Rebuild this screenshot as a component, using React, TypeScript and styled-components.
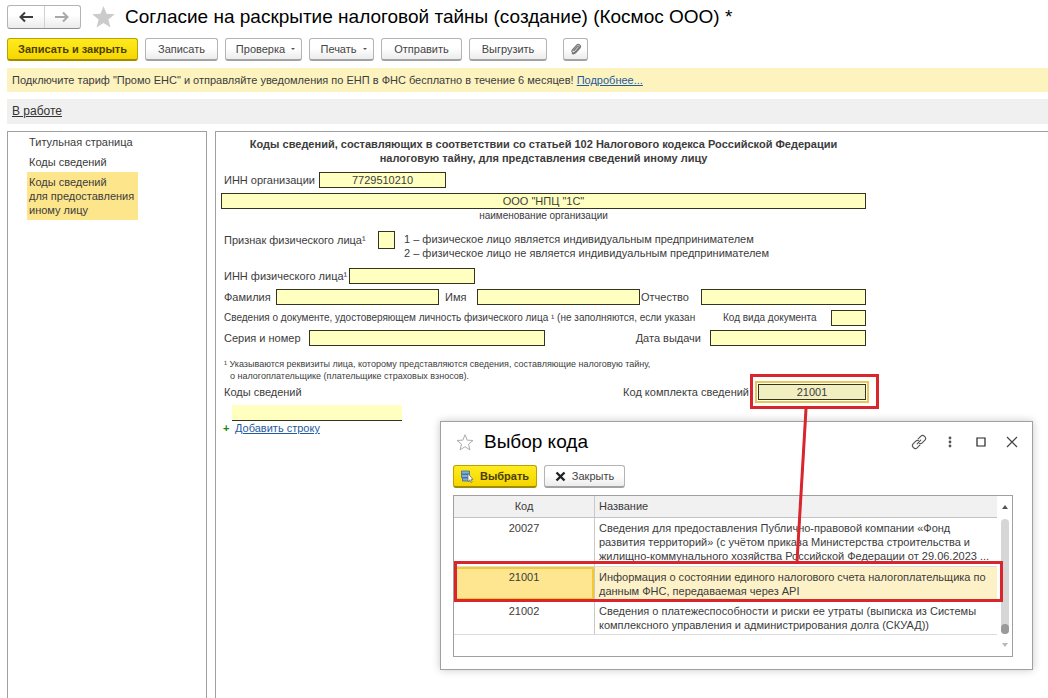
import React from "react";
import styled, { createGlobalStyle, css } from "styled-components";

const Global = createGlobalStyle`
  * { box-sizing: border-box; }
  body {
    margin: 0;
    background: #fff;
    color: #3c3c3c;
    font: 11px/14px "Liberation Sans", Arial, sans-serif;
  }
  button, input { font: inherit; color: inherit; }
  h1, h2, p { margin: 0; font-weight: normal; }
`;

const Page = styled.div`
  position: relative;
  display: flex;
  flex-direction: column;
  height: 100vh;
  overflow: hidden;
  padding: 4px 0 0 7px;
`;

const TitleBar = styled.header`
  display: flex;
  align-items: center;
  height: 25px;
`;

const NavGroup = styled.div`
  display: flex;
  width: 74px;
  height: 24px;
  border: 1px solid #b4b4b4;
  border-bottom-color: #8e8e8e;
  border-radius: 3px;
  background: linear-gradient(#fff 40%, #ebebeb);
`;

const NavButton = styled.button`
  flex: 1;
  display: flex;
  align-items: center;
  justify-content: center;
  padding: 0;
  border: 0;
  background: none;
  & + & { border-left: 1px solid #d2d2d2; }
`;

const IconButton = styled.button`
  display: flex;
  align-items: center;
  justify-content: center;
  padding: 0;
  border: 0;
  background: none;
`;

const StarButton = styled(IconButton)`
  margin: 0 9px 0 10px;
`;

const PageTitle = styled.h1`
  font-size: 19px;
  line-height: 24px;
  color: #000;
  white-space: nowrap;
`;

const Toolbar = styled.div<{ $top: number }>`
  display: flex;
  gap: 7px;
  margin-top: ${(p) => p.$top}px;
`;

const Button = styled.button<{ $w: number; $primary?: boolean; $apart?: boolean }>`
  display: flex;
  align-items: center;
  justify-content: center;
  gap: 6px;
  width: ${(p) => p.$w}px;
  height: 23px;
  padding: 0;
  white-space: nowrap;
  border: 1px solid #b4b4b4;
  border-bottom: 2px solid #a2a2a2;
  border-radius: 3px;
  background: linear-gradient(#fff 45%, #ececec);
  color: #444;
  ${(p) => p.$apart && css`margin-left: 9px;`}
  ${(p) =>
    p.$primary &&
    css`
      border-color: #b9a300;
      border-bottom-color: #a08c00;
      background: linear-gradient(#ffeb1f, #f5d500);
      color: #4a4000;
      font-weight: bold;
    `}
`;

const Caret = styled.span`
  width: 0;
  margin-right: -4px;
  border: 2px solid transparent;
  border-top-color: #555;
  border-bottom: 0;
`;

const Banner = styled.p`
  height: 24px;
  margin-top: 7px;
  padding-left: 5px;
  line-height: 24px;
  background: #fdf3bf;
`;

const Link = styled.a`
  color: #1f5ba0;
  text-decoration: underline;
`;

const StatusBar = styled.div`
  height: 25px;
  margin-top: 7px;
  padding-left: 5px;
  font-size: 12px;
  line-height: 25px;
  background: #f0f0f0;
  a { color: #333; }
`;

const Body = styled.div`
  flex: 1;
  display: flex;
  gap: 8px;
  margin-top: 7px;
`;

const Sections = styled.nav`
  flex: 0 0 200px;
  display: flex;
  flex-direction: column;
  align-items: flex-start;
  padding-left: 19px;
  border: 1px solid #a0a0a0;
  border-bottom: 0;
`;

const SectionLink = styled.a<{ $active?: boolean }>`
  padding: 3px 2px;
  color: inherit;
  text-decoration: none;
  white-space: pre-line;
  background: ${(p) => (p.$active ? "#fce58b" : "none")};
  ${(p) => p.$active && css`width: 111px;`}
`;

const FormPanel = styled.main`
  flex: 1;
  min-width: 0;
  padding: 5px;
  border: 1px solid #a0a0a0;
  border-width: 1px 0 0 1px;
`;

const Sheet = styled.form`
  max-width: 645px;
`;

const SheetTitle = styled.h2`
  font-size: 11px;
  font-weight: bold;
  line-height: 14px;
  text-align: center;
`;

const Row = styled.div<{ $top?: number; $start?: boolean }>`
  display: flex;
  align-items: ${(p) => (p.$start ? "flex-start" : "center")};
  min-height: 16px;
  margin-top: ${(p) => p.$top ?? 5}px;
  ${(p) => p.$start && css`label { line-height: 18px; }`}
`;

const Label = styled.label<{ $w?: number; $indent?: number; $end?: boolean; $small?: boolean }>`
  flex: ${(p) => (p.$w ? `0 0 ${p.$w}px` : "1")};
  min-width: 0;
  padding: ${(p) => (p.$end ? "0 9px 0 0" : `0 0 0 ${p.$indent ?? 3}px`)};
  text-align: ${(p) => (p.$end ? "right" : "left")};
  white-space: nowrap;
  font-size: ${(p) => (p.$small ? 10 : 11)}px;
`;

const Field = styled.input<{ $w?: number; $focused?: boolean; $line?: boolean; $h?: number }>`
  ${(p) => (p.$w ? css`flex: 0 0 ${p.$w}px; width: ${p.$w}px;` : css`flex: 1; min-width: 0; width: 100%;`)}
  height: ${(p) => p.$h ?? 16}px;
  padding: 0;
  border: 1px solid #33331f;
  border-radius: 0;
  background: #ffffc0;
  text-align: center;
  ${(p) => p.$line && css`border-width: 0 0 1px; margin-left: 11px;`}
  ${(p) => p.$focused && css`background: #f1eebf; outline: 2px solid #eac750; outline-offset: 1px;`}
`;

const Caption = styled.p`
  margin-top: 1px;
  font-size: 10px;
  line-height: 12px;
  text-align: center;
`;

const Legend = styled.p`
  padding: 1px 0 0 9px;
`;

const Footnote = styled.p`
  margin-top: 12px;
  padding-left: 9px;
  text-indent: -6px;
  font-size: 9px;
  line-height: 12px;
  span { display: block; text-indent: 0; }
`;

const AddRow = styled.div`
  display: flex;
  align-items: center;
  gap: 5px;
  padding-left: 2px;
  b { color: #128a12; width: 7px; }
`;

const Dialog = styled.section`
  position: absolute;
  left: 440px;
  top: 421px;
  width: 593px;
  padding: 7px 19px 12px 12px;
  border: 1px solid #a0a0a0;
  background: #fff;
  box-shadow: 0 0 8px rgba(0, 0, 0, 0.22);
`;

const DialogHead = styled.header`
  display: flex;
  align-items: center;
  height: 26px;
  padding-left: 3px;
`;

const DialogTitle = styled.h2`
  flex: 1;
  padding-left: 10px;
  font-size: 19px;
  line-height: 24px;
  color: #000;
`;

const WindowTools = styled.div`
  display: flex;
  align-items: center;
  gap: 15px;
  margin-right: -7px;
  button { width: 16px; height: 16px; }
`;

const ListFrame = styled.div`
  display: flex;
  height: 162px;
  margin-top: 7px;
  border: 1px solid #a0a0a0;
`;

const CodeTable = styled.table`
  flex: 1;
  align-self: flex-start;
  border-collapse: separate;
  border-spacing: 0;
  table-layout: fixed;
  th, td {
    padding: 3px 4px 2px;
    text-align: left;
    vertical-align: top;
    border-bottom: 1px solid #dcdcdc;
  }
  th {
    height: 22px;
    font-weight: normal;
    background: #f1f1f1;
    border-bottom-color: #c4c4c4;
  }
  th:first-child, td:first-child {
    width: 141px;
    text-align: center;
    border-right: 1px solid #c8c8c8;
  }
`;

const CodeRow = styled.tr<{ $selected?: boolean }>`
  td { height: 33px; white-space: pre-line; }
  &:first-child td { height: 49px; }
  ${(p) =>
    p.$selected &&
    css`
      td { background: #fdf1c8; }
      td:first-child { background: #fde68f; box-shadow: inset 0 0 0 2px #f4c930; }
    `}
`;

const Scrollbar = styled.div`
  flex: 0 0 15px;
  display: flex;
  flex-direction: column;
  align-items: center;
  padding: 9px 0 9px;
`;

const Track = styled.div`
  flex: 1;
  display: flex;
  align-items: flex-end;
  width: 8px;
  margin: 10px 0 9px;
  border-radius: 4px;
  background: #d6d6d6;
`;

const Thumb = styled.div`
  width: 8px;
  height: 10px;
  border-radius: 4px;
  background: #9a9a9a;
`;

const Arrow = styled.span<{ $down?: boolean }>`
  border: 3px solid transparent;
  ${(p) =>
    p.$down
      ? css`border-top: 4px solid #b8b8b8; border-bottom: 0;`
      : css`border-bottom: 4px solid #555; border-top: 0;`}
`;

const Marks = styled.svg`
  position: absolute;
  left: 0;
  top: 0;
  pointer-events: none;
`;

const ArrowIcon = ({ back }: { back?: boolean }) => (
  <svg width="16" height="12" viewBox="0 0 16 12" fill="none" stroke={back ? "#3c3c3c" : "#a8a8a8"} strokeWidth="2">
    {back ? <path d="M15 6H3M7 1.500L2.500 6l4.500 4.500" /> : <path d="M1 6h12M9 1.500L13.500 6 9 10.500" />}
  </svg>
);

const STAR = "M12 1l2.900 7.300 7.900.5-6.100 5 2 7.700L12 17.200l-6.700 4.300 2-7.700-6.100-5 7.900-.5z";

const sections = [
  "Титульная страница",
  "Коды сведений",
  "Коды сведений\nдля предоставления\nиному лицу",
];

const codes = [
  {
    code: "20027",
    name: "Сведения для предоставления Публично-правовой компании «Фонд\nразвития территорий» (с учётом приказа Министерства строительства и\nжилищно-коммунального хозяйства Российской Федерации от 29.06.2023 ...",
  },
  {
    code: "21001",
    name: "Информация о состоянии единого налогового счета налогоплательщика по\nданным ФНС, передаваемая через API",
  },
  {
    code: "21002",
    name: "Сведения о платежеспособности и риски ее утраты (выписка из Системы\nкомплексного управления и администрирования долга (СКУАД))",
  },
];

export default function App() {
  return (
    <Page>
      <Global />
      <TitleBar>
        <NavGroup>
          <NavButton aria-label="Назад"><ArrowIcon back /></NavButton>
          <NavButton aria-label="Вперед"><ArrowIcon /></NavButton>
        </NavGroup>
        <StarButton aria-label="В избранное">
          <svg width="25" height="24" viewBox="0 0 24 23"><path d={STAR} fill="#cbcbcb" /></svg>
        </StarButton>
        <PageTitle>Согласие на раскрытие налоговой тайны (создание) (Космос ООО) *</PageTitle>
      </TitleBar>

      <Toolbar $top={9}>
        <Button $w={131} $primary>Записать и закрыть</Button>
        <Button $w={73}>Записать</Button>
        <Button $w={77}>Проверка <Caret /></Button>
        <Button $w={65}>Печать <Caret /></Button>
        <Button $w={81}>Отправить</Button>
        <Button $w={78}>Выгрузить</Button>
        <Button $w={25} $apart aria-label="Вложения">
          <svg width="12" height="12" viewBox="0 0 12 12" fill="none" stroke="#777" strokeWidth="1.200">
            <path d="M3.500 8l4-4.500c1-1 2.300.2 1.400 1.200L5 9.200C3.500 10.900.9 8.900 2.400 7L6.500 2.400C8.600.2 11.700 2.700 9.900 5L5.800 9.700c-1 1-2.600 1.500-3.900.6" />
          </svg>
        </Button>
      </Toolbar>

      <Banner>
        Подключите тариф "Промо ЕНС" и отправляйте уведомления по ЕНП в ФНС бесплатно в течение 6 месяцев!{" "}
        <Link href="#more">Подробнее...</Link>
      </Banner>
      <StatusBar><Link href="#status">В работе</Link></StatusBar>

      <Body>
        <Sections>
          {sections.map((s, i) => (
            <SectionLink key={s} href={`#section-${i}`} $active={i === 2}>{s}</SectionLink>
          ))}
        </Sections>
        <FormPanel>
          <Sheet>
            <SheetTitle>
              Коды сведений, составляющих в соответствии со статьей 102 Налогового кодекса Российской Федерации
              <br />
              налоговую тайну, для представления сведений иному лицу
            </SheetTitle>
            <Row $top={7}>
              <Label $w={98} htmlFor="orgInn">ИНН организации</Label>
              <Field $w={127} id="orgInn" defaultValue="7729510210" />
            </Row>
            <Row>
              <Field aria-label="наименование организации" defaultValue={'ООО "НПЦ "1С"'} />
            </Row>
            <Caption>наименование организации</Caption>
            <Row $top={9} $start>
              <Label $w={157} htmlFor="sign">Признак физического лица¹</Label>
              <Field $w={17} $h={18} id="sign" />
              <Legend>
                1 – физическое лицо является индивидуальным предпринимателем
                <br />
                2 – физическое лицо не является индивидуальным предпринимателем
              </Legend>
            </Row>
            <Row $top={8}>
              <Label $w={128} htmlFor="personInn">ИНН физического лица¹</Label>
              <Field $w={126} id="personInn" />
            </Row>
            <Row>
              <Label $w={55} htmlFor="last">Фамилия</Label>
              <Field $w={163} id="last" />
              <Label $w={38} $indent={6} htmlFor="first">Имя</Label>
              <Field $w={163} id="first" />
              <Label $w={61} $indent={1} htmlFor="middle">Отчество</Label>
              <Field id="middle" />
            </Row>
            <Row>
              <Label as="span" $w={500} $small>
                Сведения о документе, удостоверяющем личность физического лица ¹ (не заполняются, если указан
              </Label>
              <Label $w={110} $indent={2} $small htmlFor="docKind">Код вида документа</Label>
              <Field id="docKind" />
            </Row>
            <Row $top={4}>
              <Label $w={88} htmlFor="serial">Серия и номер</Label>
              <Field $w={236} id="serial" />
              <Label $w={165} $end htmlFor="issued">Дата выдачи</Label>
              <Field id="issued" />
            </Row>
            <Footnote>
              ¹ Указываются реквизиты лица, которому представляются сведения, составляющие налоговую тайну,
              <span>о налогоплательщике (плательщике страховых взносов).</span>
            </Footnote>
            <Row $top={2}>
              <Label htmlFor="codes">Коды сведений</Label>
              <Label $end htmlFor="kit">Код комплекта сведений</Label>
              <Field $w={108} $focused id="kit" defaultValue="21001" />
            </Row>
            <Row>
              <Field $w={170} $line id="codes" />
            </Row>
            <AddRow><b>+</b><Link href="#add">Добавить строку</Link></AddRow>
          </Sheet>
        </FormPanel>
      </Body>

      <Dialog role="dialog" aria-label="Выбор кода">
        <DialogHead>
          <IconButton aria-label="В избранное">
            <svg width="18" height="17" viewBox="0 0 24 23"><path d={STAR} fill="none" stroke="#a8a8a8" strokeWidth="1.300" /></svg>
          </IconButton>
          <DialogTitle>Выбор кода</DialogTitle>
          <WindowTools>
            <IconButton aria-label="Ссылка">
              <svg width="16" height="16" viewBox="0 0 16 16" fill="none" stroke="#555" strokeWidth="1.200" strokeLinecap="round">
                <path d="M7.200 4.800L9.900 2.100c2.300-2.200 6.200 1.500 4 4L11.200 8.800c-.7.7-1.700 1-2.600.7" />
                <path d="M8.800 11.200L6.100 13.900c-2.300 2.200-6.200-1.500-4-4L4.800 7.200c.7-.7 1.700-1 2.600-.7" />
                <path d="M6.200 9.800l3.600-3.600" />
              </svg>
            </IconButton>
            <IconButton aria-label="Еще">
              <svg width="4" height="12" viewBox="0 0 4 12" fill="#555"><circle cx="2" cy="2" r="1.400" /><circle cx="2" cy="6" r="1.400" /><circle cx="2" cy="10" r="1.400" /></svg>
            </IconButton>
            <IconButton aria-label="Развернуть">
              <svg width="10" height="10" viewBox="0 0 10 10"><path d="M1 1h8v8H1z" fill="none" stroke="#222" strokeWidth="1.200" /></svg>
            </IconButton>
            <IconButton aria-label="Закрыть окно">
              <svg width="12" height="12" viewBox="0 0 12 12"><path d="M1 1l10 10M11 1L1 11" stroke="#444" strokeWidth="1.200" /></svg>
            </IconButton>
          </WindowTools>
        </DialogHead>
        <Toolbar $top={10}>
          <Button $w={84} $primary>
            <svg width="13" height="13" viewBox="0 0 13 13">
              <path d="M.5 1h8v3h-8zM.5 4.500h8v3h-8zM1.500 8h8v3h-8z" fill="#7fb0dc" stroke="#36699e" strokeWidth=".8" />
              <path d="M7 3.500v8l1.800-1.600 1.200 2.600 1.200-.6-1.200-2.500H12z" fill="#fff" stroke="#666" strokeWidth=".7" />
            </svg>
            Выбрать
          </Button>
          <Button $w={81}>
            <svg width="11" height="11" viewBox="0 0 11 11"><path d="M1.500 1.500l8 8M9.500 1.500l-8 8" stroke="#222" strokeWidth="2.400" /></svg>
            Закрыть
          </Button>
        </Toolbar>
        <ListFrame>
          <CodeTable>
            <thead>
              <tr><th>Код</th><th>Название</th></tr>
            </thead>
            <tbody>
              {codes.map((c) => (
                <CodeRow key={c.code} $selected={c.code === "21001"}>
                  <td>{c.code}</td>
                  <td>{c.name}</td>
                </CodeRow>
              ))}
            </tbody>
          </CodeTable>
          <Scrollbar>
            <Arrow />
            <Track><Thumb /></Track>
            <Arrow $down />
          </Scrollbar>
        </ListFrame>
      </Dialog>

      <Marks width="1048" height="698" viewBox="0 0 1048 698" fill="none" stroke="#d9252c" strokeWidth="3">
        <rect x="751.500" y="375.500" width="126" height="32" />
        <path d="M806 409L797 562" />
        <rect x="455.500" y="562.500" width="546" height="38" />
      </Marks>
    </Page>
  );
}
